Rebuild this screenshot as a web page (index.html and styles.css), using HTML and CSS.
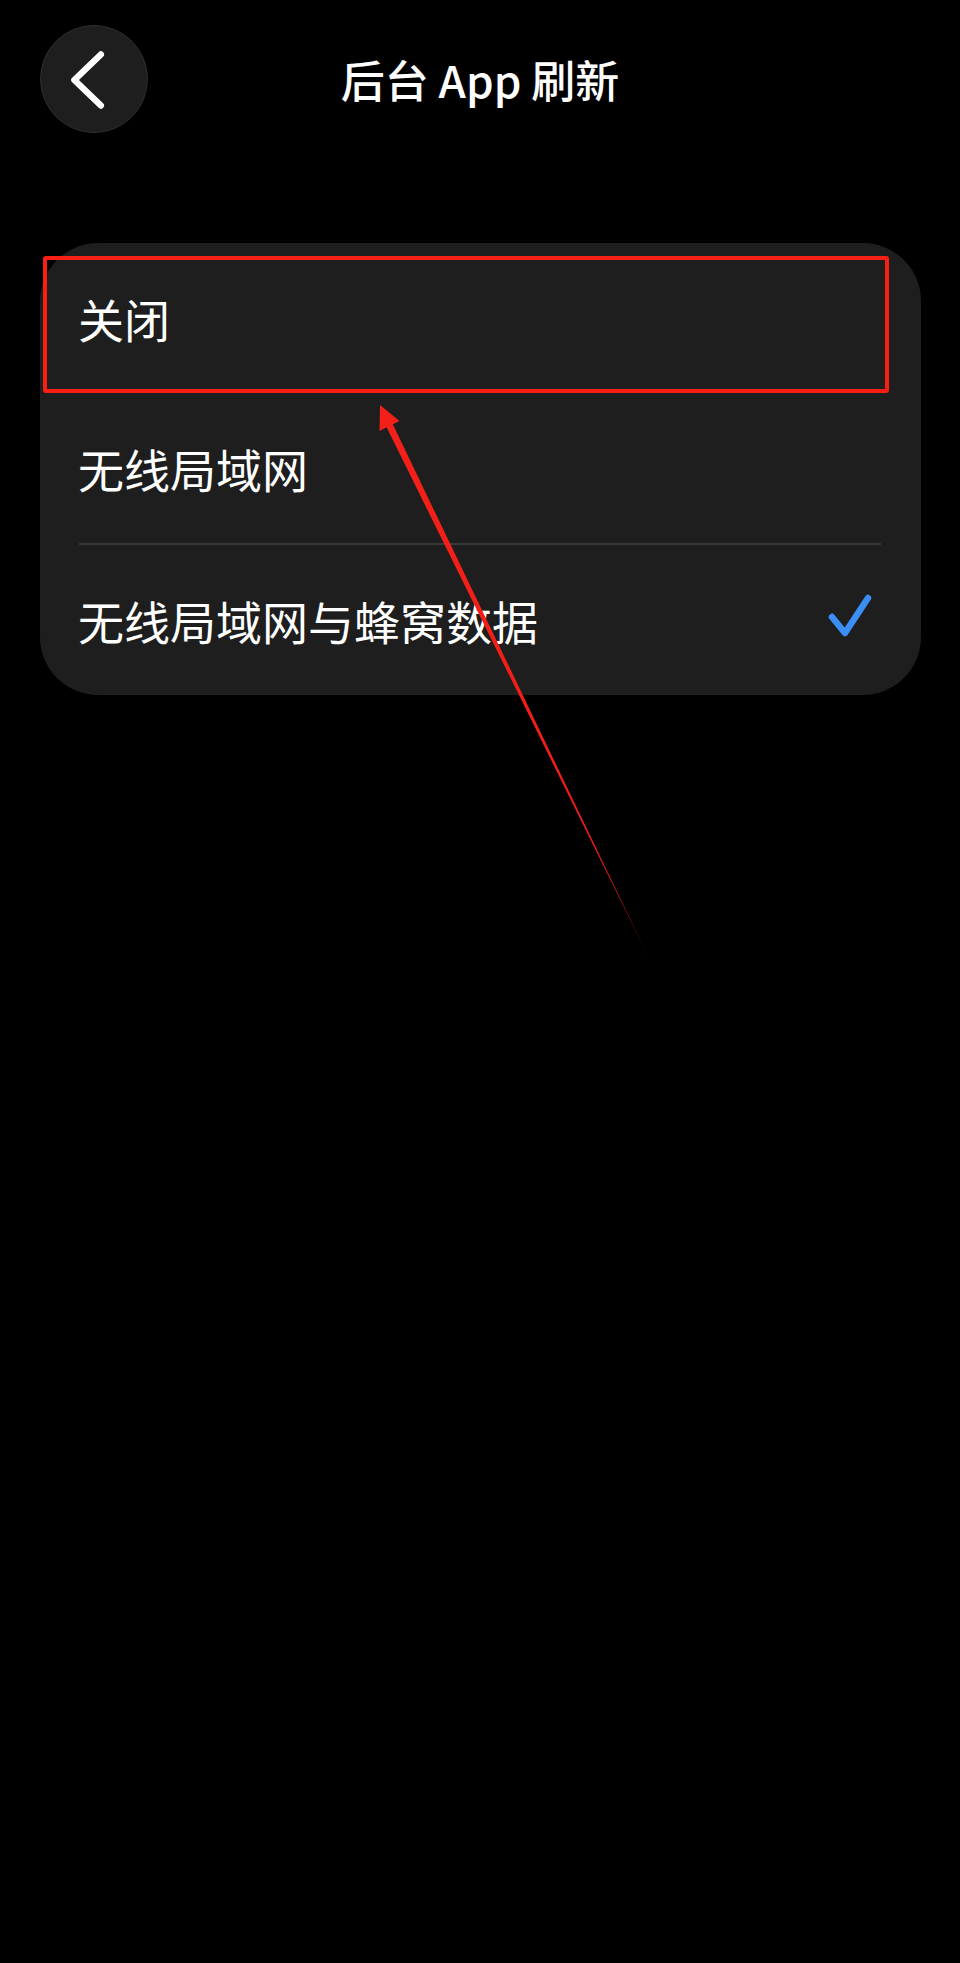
FILE: index.html
```html
<!DOCTYPE html>
<html lang="zh-CN">
<head>
  <meta charset="UTF-8" />
  <title>后台 App 刷新</title>
  <link rel="stylesheet" href="styles.css">
</head>
<body>
  <div class="header">
    <div class="back-btn">
      <svg width="108" height="108" viewBox="0 0 108 108">
        <polyline points="61,29 34,55 61,81" fill="none" stroke="#fff" stroke-width="6.5" stroke-linecap="round" stroke-linejoin="round"/>
      </svg>
    </div>
    <h1 class="title">后台 App 刷新</h1>
    <div></div>
  </div>

  <div class="card">
    <div class="row">关闭</div>
    <div class="row">无线局域网</div>
    <div class="divider"></div>
    <div class="row">
      <span>无线局域网与蜂窝数据</span>
      <svg class="check" width="46" height="46" viewBox="0 0 46 46">
        <polyline points="5,23 18,39 41,4" fill="none" stroke="#3b8ef3" stroke-width="6.5" stroke-linecap="round" stroke-linejoin="round"/>
      </svg>
    </div>
  </div>

  <!-- annotation -->
  <div class="mark-box"></div>
  <svg class="mark-arrow" width="960" height="1000" viewBox="0 0 960 1000">
    <defs>
      <linearGradient id="fade" x1="380" y1="406" x2="647" y2="954" gradientUnits="userSpaceOnUse">
        <stop offset="0" stop-color="#f4201a"/>
        <stop offset="0.8" stop-color="#f01d17"/>
        <stop offset="1" stop-color="#7a0c08"/>
      </linearGradient>
    </defs>
    <polygon points="380,405 399.5,421 392.8,424.3 647,954 386.6,427.3 379.5,431" fill="url(#fade)"/>
  </svg>
</body>
</html>
```

FILE: styles.css
```css
body {
  margin: 0;
  background: #000;
  color: #fff;
  font-family: "Noto Sans CJK SC", "Noto Sans", sans-serif;
  min-height: 1963px;
}
.header {
  display: grid;
  grid-template-columns: 1fr auto 1fr;
  align-items: center;
  padding: 25px 0 0 40px;
}
.back-btn {
  width: 106px;
  height: 106px;
  border-radius: 50%;
  background: #1e1e1e;
  border: 1px solid #2e2e30;
  display: flex;
  align-items: center;
  justify-content: center;
  overflow: hidden;
}
.title {
  margin: 0;
  font-size: 44px;
  font-weight: 500;
  padding-right: 40px;
}
.card {
  margin: 110px 39px 0 40px;
  background: #1e1e1e;
  border-radius: 58px;
}
.row {
  height: 150px;
  display: flex;
  align-items: center;
  justify-content: space-between;
  padding: 0 48px 0 38px;
  font-size: 46px;
}
.divider {
  height: 2px;
  background: #38383a;
  margin: 0 40px 0 39px;
}
.check {
  margin-top: -6px;
}
.mark-box {
  position: absolute;
  left: 43px;
  top: 256px;
  width: 838px;
  height: 129px;
  border: 4px solid #fa1f14;
  border-radius: 3px;
}
.mark-arrow {
  position: absolute;
  left: 0;
  top: 0;
}
```
